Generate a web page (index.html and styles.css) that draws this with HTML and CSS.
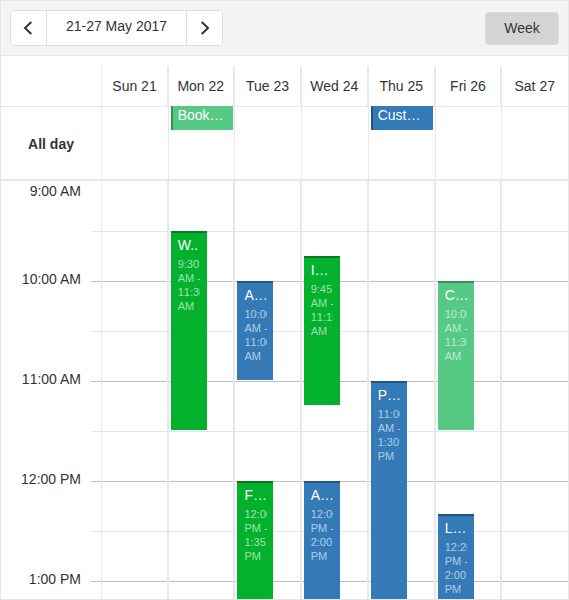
FILE: index.html
```html
<!DOCTYPE html>
<html lang="en">
<head>
<meta charset="utf-8">
<title>Week calendar</title>
<link rel="stylesheet" href="styles.css">
</head>
<body>
<div class="scheduler">
  <header class="toolbar">
    <div class="nav">
      <button class="nav-btn" aria-label="Previous"><svg width="10" height="14" viewBox="0 0 10 14"><path d="M8.300 1 2 7l6.300 6"/></svg></button>
      <button class="nav-date">21-27 May 2017</button>
      <button class="nav-btn next" aria-label="Next"><svg width="10" height="14" viewBox="0 0 10 14"><path d="M1.700 1 8 7l-6.300 6"/></svg></button>
    </div>
    <button class="view">Week</button>
  </header>
  <div class="row head">
    <div class="side"></div>
    <div class="day">Sun 21</div><div class="day">Mon 22</div><div class="day wide">Tue 23</div><div class="day">Wed 24</div><div class="day">Thu 25</div><div class="day wide">Fri 26</div><div class="day">Sat 27</div>
  </div>
  <div class="row allday">
    <div class="side">All day</div>
    <div class="day"></div>
    <div class="day"><div class="chip mint">Book…</div></div>
    <div class="day"></div>
    <div class="day"></div>
    <div class="day"><div class="chip blue">Cust…</div></div>
    <div class="day"></div>
    <div class="day"></div>
  </div>
  <div class="row body">
    <div class="side hours">
      <div class="am">9:00 AM</div><div class="am">10:00 AM</div><div class="am">11:00 AM</div><div>12:00 PM</div><div>1:00 PM</div>
    </div>
    <div class="day"></div>
    <div class="day">
      <div class="event green" style="top:50px;height:199px"><b>W..</b><p>9:30<br>AM -<br>11:30<br>AM</p></div>
    </div>
    <div class="day shifted">
      <div class="event blue" style="top:100px;height:99px"><b>A…</b><p>10:00<br>AM -<br>11:00<br>AM</p></div>
      <div class="event green" style="top:300px;height:158px"><b>F…</b><p>12:00<br>PM -<br>1:35<br>PM</p></div>
    </div>
    <div class="day">
      <div class="event green" style="top:75px;height:149px"><b>I…</b><p>9:45<br>AM -<br>11:15<br>AM</p></div>
      <div class="event blue" style="top:300px;height:199px"><b>A…</b><p>12:00<br>PM -<br>2:00<br>PM</p></div>
    </div>
    <div class="day">
      <div class="event blue" style="top:200px;height:249px"><b>P…</b><p>11:00<br>AM -<br>1:30<br>PM</p></div>
    </div>
    <div class="day">
      <div class="event mint" style="top:100px;height:149px"><b>C…</b><p>10:00<br>AM -<br>11:30<br>AM</p></div>
      <div class="event blue" style="top:333.300px;height:166px"><b>L…</b><p>12:20<br>PM -<br>2:00<br>PM</p></div>
    </div>
    <div class="day"></div>
  </div>
</div>
</body>
</html>
```
FILE: styles.css
```css
* { box-sizing: border-box; }
body {
  margin: 0;
  background: #fff;
  color: #333;
  font: 14px/20px "Liberation Sans", Arial, sans-serif;
}
.scheduler {
  display: flex;
  flex-direction: column;
  width: 569px;
  height: 600px;
  border: 1px solid #e6e6e6;
  overflow: hidden;
}
.toolbar {
  display: flex;
  justify-content: space-between;
  align-items: flex-start;
  flex: none;
  height: 55px;
  padding: 9px;
  background: #f4f4f4;
  border-bottom: 1px solid #e6e6e6;
}
button {
  padding: 0;
  border: 0;
  background: none;
  color: #333;
  font: inherit;
}
.nav {
  display: grid;
  grid-template-columns: 35px 141px 35px;
  width: 213px;
  height: 36px;
  border: 1px solid #dedede;
  border-radius: 4px;
  background: #fff;
}
.nav-btn { display: flex; align-items: center; justify-content: center; padding-right: 1px; }
.nav-btn.next { padding-right: 0; padding-left: 1px; }
.nav-btn svg { fill: none; stroke: #333; stroke-width: 2; }
.nav-date {
  padding-bottom: 4px;
  border: solid #dedede;
  border-width: 0 1px;
}
.view {
  width: 74px;
  height: 33px;
  margin-top: 2px;
  padding-bottom: 2px;
  border: 1px solid #dadada;
  border-radius: 4px;
  background: #d4d4d4;
}
.row {
  display: grid;
  grid-template-columns: 100px 68px 66px 67px 67px 67px 66px 66px;
  flex: none;
}
.day {
  position: relative;
  border-right: 2px solid #e8e8e8;
}
.side + .day { border-left: 1px solid #e8e8e8; }
.day:last-child { border-right: 0; }
.head { height: 51px; padding-top: 10px; border-bottom: 1px solid #e8e8e8; }
.head .day { padding: 10px 0.500px 0 0; text-align: center; white-space: nowrap; }
.head .side + .day, .head .wide { padding-right: 0; }
.allday { height: 74px; border-bottom: 2px solid #e8e8e8; }
.allday .day { border-right-width: 1px; }
.allday .day:last-child { border-right: 0; }
.allday .side { align-self: center; padding-top: 2px; text-align: center; font-weight: bold; }
.chip {
  position: absolute;
  top: -1px;
  left: 2px;
  width: 62px;
  height: 24px;
  padding-left: 4.700px;
  border-left: 2px solid;
  color: #fff;
  line-height: 18px;
}
.body {
  flex: 1;
  min-height: 0;
  background: repeating-linear-gradient(transparent 0 50px, #e6e6e6 50px 51px, transparent 51px 100px) 90px 0 / 477px 100px no-repeat,
    repeating-linear-gradient(#bfbfbf 0 1px, transparent 1px 50px, #e6e6e6 50px 51px, transparent 51px 100px) 90px 100px / 477px 400px no-repeat;
}
.hours { padding-right: 20px; text-align: right; font-kerning: none; }
.hours div { height: 100px; }
.hours .am { word-spacing: -.78px; }
.hours div:first-child { height: 88px; }
.event {
  position: absolute;
  left: 2px;
  width: 36px;
  padding: 3px 6px 0 6.700px;
  border-top: 2px solid;
  color: #fff;
  overflow: hidden;
  white-space: nowrap;
}
.shifted .event { padding-left: 7.400px; padding-right: 5.600px; }
.event b {
  display: block;
  height: 20px;
  line-height: 19px;
  font-weight: normal;
}
.event p {
  width: 22.400px;
  margin: 1px 0 0;
  overflow: hidden;
  font-size: 11px;
  line-height: 14px;
  font-kerning: none;
  opacity: .6;
}
.green { background: #04b12d; border-color: #067c20; }
.blue { background: #337ab7; border-color: #245580; }
.mint { background: #56ca85; border-color: #3c8d5d; }
```
